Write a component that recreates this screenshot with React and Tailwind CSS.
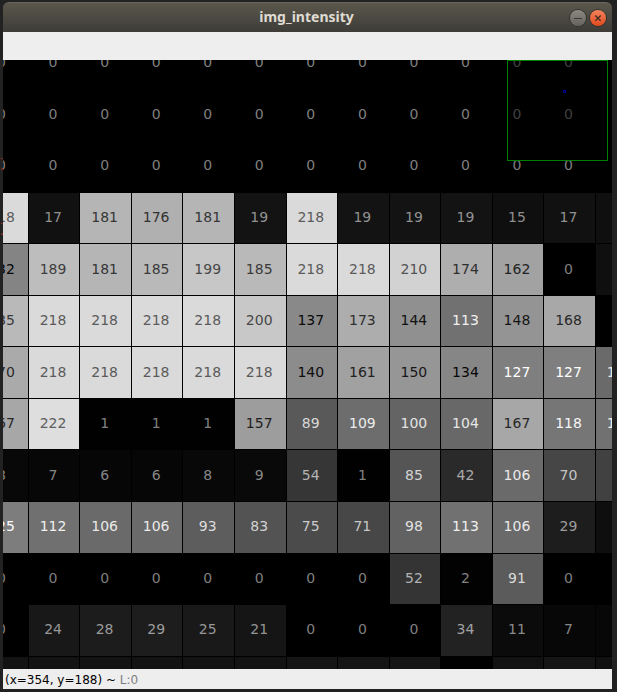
const ROWS = [
  [0, 0, 0, 0, 0, 0, 0, 0, 0, 0, 0, 0, 0],
  [0, 0, 0, 0, 0, 0, 0, 0, 0, 0, 0, 0, 0],
  [0, 0, 0, 0, 0, 0, 0, 0, 0, 0, 0, 0, 0],
  [218, 17, 181, 176, 181, 19, 218, 19, 19, 19, 15, 17, 15],
  [132, 189, 181, 185, 199, 185, 218, 218, 210, 174, 162, 0, 15],
  [185, 218, 218, 218, 218, 200, 137, 173, 144, 113, 148, 168, 0],
  [170, 218, 218, 218, 218, 218, 140, 161, 150, 134, 127, 127, 106],
  [167, 222, 1, 1, 1, 157, 89, 109, 100, 104, 167, 118, 113],
  [8, 7, 6, 6, 8, 9, 54, 1, 85, 42, 106, 70, 65],
  [125, 112, 106, 106, 93, 83, 75, 71, 98, 113, 106, 29, 14],
  [0, 0, 0, 0, 0, 0, 0, 0, 52, 2, 91, 0, 0],
  [0, 24, 28, 29, 25, 21, 0, 0, 0, 34, 11, 7, 7],
  [19, 19, 19, 19, 19, 19, 21, 21, 21, 1, 18, 21, 17],
];

const LAST_ROW = ROWS.length - 1;
const LAST_COL = ROWS[0].length - 1;

const gray = (v) => `rgb(${v}, ${v}, ${v})`;
const inkFor = (v) => gray(v > 127 ? v - 127 : v + 127);

// The outermost cells are clipped; only three-digit values reach into view on the right.
const hasLabel = (value, x, y) => y < LAST_ROW && (x < LAST_COL || value > 99);

function Cell({ value, labelled }) {
  return (
    <div
      className="flex min-h-0 min-w-0 items-center justify-center border-t border-l border-black pr-0.5 pb-0.5"
      style={{ backgroundColor: gray(value), color: inkFor(value) }}
    >
      {labelled ? value : null}
    </div>
  );
}

function TitleBar() {
  return (
    <header className="grid h-[30px] grid-cols-[1fr_auto_1fr] items-center rounded-t-md border-t border-[#6a665a] bg-linear-to-b from-[#5b574c] to-[#3d3c38] px-1.5">
      <h1 className="col-start-2 pr-0.5 pb-0.5 font-['Noto_Sans',sans-serif] text-sm leading-5 font-bold text-[#dfdbd2]">
        img_intensity
      </h1>
      <div className="flex justify-end gap-1">
        <button
          type="button"
          aria-label="Minimize"
          className="flex size-4 items-center justify-center rounded-full bg-linear-to-b from-[#8c8981] to-[#65635d] ring-1 ring-[#34332e]"
        >
          <svg viewBox="0 0 16 16" className="size-4" stroke="#3a3935" strokeWidth="1">
            <path d="M4 8.5h8" />
          </svg>
        </button>
        <button
          type="button"
          aria-label="Close"
          className="flex size-4 items-center justify-center rounded-full bg-linear-to-b from-[#f5825c] to-[#de4a18] ring-1 ring-[#34332e]"
        >
          <svg viewBox="0 0 16 16" className="size-4" stroke="#3b2c22" strokeWidth="1.3">
            <path d="M5.3 5.5l5.4 5.4M10.7 5.5l-5.4 5.4" />
          </svg>
        </button>
      </div>
    </header>
  );
}

function EdgeMarks() {
  return (
    <svg
      viewBox="0 0 3 80"
      className="absolute top-[157px] left-0 h-20 w-[3px]"
      fill="none"
      stroke="#b8342c"
      strokeWidth="1"
    >
      <path d="M1 1.5h1l1 1M1 12.5l2-1M1 66.5h1l1 1M1 77.5l2-1" />
    </svg>
  );
}

export default function App() {
  return (
    <div className="relative min-h-screen bg-[#222222] pt-0.5 pr-[5px] pb-[3px] pl-[3px] font-['DejaVu_Sans',sans-serif]">
      <TitleBar />
      <div className="h-7 bg-[#eeeeee]" />
      <main className="relative aspect-square overflow-hidden bg-black">
        <div className="mt-[-3.77%] ml-[-4.4%] grid aspect-square w-[110.04%] grid-cols-13 grid-rows-13 text-sm">
          {ROWS.flatMap((row, y) =>
            row.map((v, x) => <Cell key={`${y}-${x}`} value={v} labelled={hasLabel(v, x, y)} />)
          )}
        </div>
        <div className="absolute top-0 right-1 size-[101px] border border-[#008000] bg-black/50">
          <div className="absolute top-[29px] left-[55px] size-[3px] border border-[#0000a0]" />
        </div>
      </main>
      <footer className="h-5 bg-[#eeeeee] px-0.5 pt-px text-xs leading-5 text-black">
        (x=354, y=188) ~ <span className="text-[#7f7f7f]">L:0</span>
      </footer>
      <EdgeMarks />
    </div>
  );
}
